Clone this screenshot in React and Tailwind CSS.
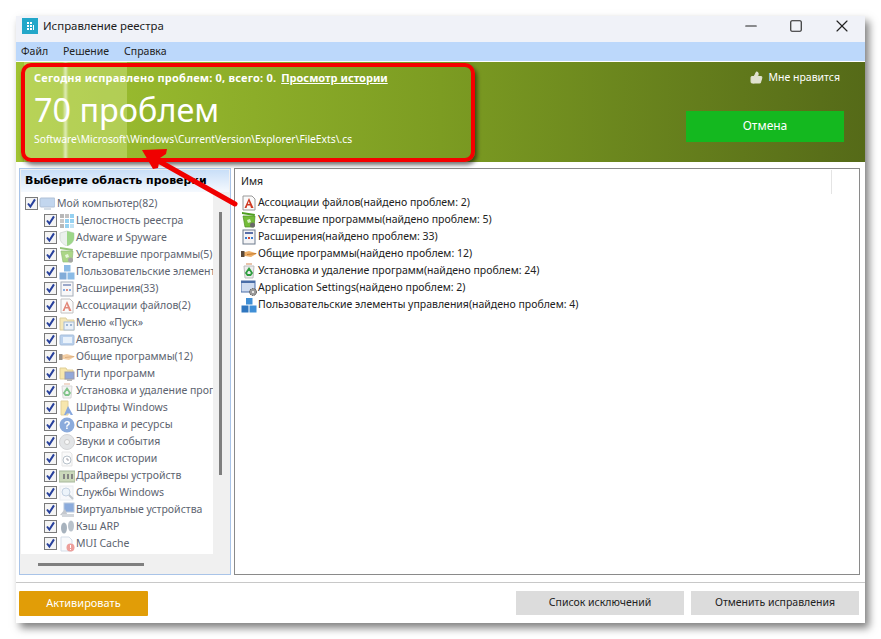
import React from 'react';
import { Minus, Square, X, ThumbsUp } from 'lucide-react';

const font = { fontFamily: '"Noto Sans", "Liberation Sans", sans-serif' };

// small hand-drawn product icons, 16 unit grid
const glyphs = {
    monitor: <><rect x="1" y="2" width="15" height="9" rx="1" fill="#a9c6e8" stroke="#8ea6c4" /><rect x="5" y="12" width="7" height="2" fill="#c3cfdc" /></>,
    grid: <><rect x="1" y="1" width="4" height="4" fill="#8a8a8a" /><rect x="6" y="1" width="4" height="4" fill="#9a9a9a" /><rect x="11" y="1" width="4" height="4" fill="#4fb3e8" /><rect x="1" y="6" width="4" height="4" fill="#a5a5a5" /><rect x="6" y="6" width="4" height="4" fill="#4fb3e8" /><rect x="11" y="6" width="4" height="4" fill="#4fb3e8" /><rect x="1" y="11" width="4" height="4" fill="#8a8a8a" /><rect x="6" y="11" width="4" height="4" fill="#4fb3e8" /><rect x="11" y="11" width="4" height="4" fill="#9ad2f0" /></>,
    shield: <><path d="M8 1 L15 3 V8 C15 12 11 15 8 16 C5 15 1 12 1 8 V3 Z" fill="#dfe8e2" stroke="#b9c6bd" /><path d="M8 1 L15 3 V8 C15 12 11 15 8 16 Z" fill="#5dbb3c" /></>,
    trash: <><path d="M1 0 L14 2 L13.5 4 L1 2 Z" fill="#4f9e22" /><path d="M2 4 H14 L13 15 H4 Z" fill="#74bc38" stroke="#4f8f22" strokeWidth="0.7" /><path d="M6 8 L9 7 L10 10 L7 11 Z" fill="#d8efc4" /><circle cx="11.5" cy="13" r="2.5" fill="#6a6a6a" /></>,
    blocks: <><rect x="5" y="1" width="6.5" height="6.5" fill="#3f8fd6" /><rect x="0.5" y="8.5" width="7" height="7" fill="#2f76bf" /><rect x="8.5" y="8.5" width="7" height="7" fill="#3f8fd6" /></>,
    calc: <><rect x="2" y="1" width="12" height="14" fill="#f4f4f6" stroke="#6d7a8c" /><rect x="4" y="3" width="8" height="2" fill="#5a6fa8" /><rect x="4" y="8" width="2" height="2" fill="#3a7bd0" /><rect x="7" y="8" width="2" height="2" fill="#c94a3a" /><rect x="10" y="8" width="2" height="2" fill="#3a7bd0" /></>,
    letter: <><path d="M2 1 H11 L14 4 V15 H2 Z" fill="#fafafa" stroke="#9a9a9a" /><path d="M8 3 L12.5 13 H10 L9.2 10.5 H6.3 L5.5 13 H3.5 Z M6.9 9 H8.7 L7.8 6.2 Z" fill="#cf3a22" /></>,
    menu: <><path d="M1 3 H7 L8 5 H15 V15 H1 Z" fill="#f0d98a" stroke="#c6ad5c" /><rect x="5" y="7" width="10" height="8" fill="#dfe9f5" stroke="#6d8fb8" /><rect x="7" y="9" width="2" height="2" fill="#5a83b5" /><rect x="11" y="9" width="2" height="2" fill="#5a83b5" /></>,
    autorun: <><rect x="1" y="3" width="14" height="10" rx="1" fill="#8db4e2" stroke="#6f93bf" /><rect x="4" y="5" width="9" height="6" fill="#dcebfa" /></>,
    hands: <><path d="M0 6 H4 L8 5 L16 7.5 L10 11 L4 10 H0 Z" fill="#eeb06a" /><rect x="0" y="5" width="3.5" height="6" fill="#5a4a3a" /><path d="M6 8.5 L15 7.5" stroke="#c47a2c" /></>,
    path: <><path d="M1 2 H7 L8 4 H14 V13 H1 Z" fill="#f2d878" stroke="#c9ac50" /><rect x="6" y="6" width="9" height="7" fill="#4a6fc0" stroke="#5a5a7a" /><rect x="8" y="13" width="5" height="2" fill="#888" /></>,
    recycle: <><path d="M3 3 H13 L12 15 H4 Z" fill="#ececec" stroke="#bdbdbd" /><path d="M5 1 H11" stroke="#e0b090" strokeWidth="1.5" /><path d="M8 5.5 L11 10 L9.5 12 H6.5 L5 10 Z" fill="none" stroke="#2f9e3f" strokeWidth="1.8" /></>,
    fonts: <><path d="M2 1 H9 V15 H2 Z" fill="#f2d878" stroke="#d1b45a" /><path d="M9 6 L14 15 H11.5 L11 13.5 H8 L7 15 H5 Z" fill="#3a6fc9" /></>,
    help: <><circle cx="8" cy="8" r="7.5" fill="#3f74c6" /><text x="8" y="12" textAnchor="middle" fontSize="11" fontWeight="700" fill="#fff" fontFamily="Liberation Sans">?</text></>,
    disc: <><circle cx="8" cy="8" r="7.5" fill="#d2d4d8" stroke="#b5b7bb" /><circle cx="8" cy="8" r="2.5" fill="#f4f4f4" stroke="#aaa" /></>,
    history: <><path d="M3 1 H11 L13 3 V15 H3 Z" fill="#f8f8f8" stroke="#d5d5d5" /><circle cx="8" cy="9" r="4" fill="#fff" stroke="#8a9aa8" /><path d="M8 7 V9 H10" stroke="#667" fill="none" /></>,
    driver: <><rect x="0" y="3" width="16" height="11" fill="#a9c08e" stroke="#6c8a5c" /><rect x="4" y="6" width="2" height="5" fill="#333" /><rect x="8" y="6" width="2" height="5" fill="#333" /><rect x="12" y="6" width="2" height="5" fill="#333" /></>,
    service: <><rect x="1" y="1" width="13" height="14" fill="#f2f5f9" stroke="#dce2e8" /><circle cx="7" cy="7" r="4" fill="#e0ecf8" stroke="#9cb4cf" /><path d="M10 10 L14 14" stroke="#9aa5b0" strokeWidth="2" /></>,
    virtual: <><rect x="5" y="1" width="10" height="9" fill="#3f74c6" stroke="#8aa2c4" /><path d="M1 13 L6 7 L9 14 Z" fill="#9da4ae" /><rect x="3" y="12" width="12" height="3" fill="#b7bdc5" /></>,
    feet: <><ellipse cx="5" cy="9" rx="3" ry="5.5" fill="#6d7f92" /><ellipse cx="12" cy="7" rx="3" ry="5.5" fill="#8b9aa9" /></>,
    mui: <><path d="M2 1 H10 L13 4 V15 H2 Z" fill="#f6f8fb" stroke="#b9c7da" /><circle cx="11.5" cy="11.5" r="4" fill="#e2605a" /><rect x="11" y="9" width="1" height="3" fill="#fff" /><rect x="11" y="13" width="1" height="1" fill="#fff" /></>,
    settings: <><rect x="0" y="1" width="14" height="11" fill="#cfdcf0" stroke="#4a6ea8" /><rect x="0" y="1" width="14" height="2" fill="#4a6ea8" /><circle cx="12" cy="12" r="3.5" fill="#9a9a9a" stroke="#555" strokeDasharray="1.5 1" /><circle cx="12" cy="12" r="1" fill="#fff" /></>,
};

const Icon = ({ name, className = '' }) => (
    <svg viewBox="0 0 16 16" className={`w-[16px] h-[16px] shrink-0 ${className}`}>{glyphs[name]}</svg>
);

const Check = () => (
    <span className="w-[13px] h-[13px] shrink-0 border border-[#7a7a7a] bg-[#f4f4f4] flex items-center justify-center">
        <svg viewBox="0 0 11 11" className="w-[11px] h-[11px]">
            <path d="M2 5.5 L4.4 8.6 L9 1.4" fill="none" stroke="#27409c" strokeWidth="2" />
        </svg>
    </span>
);

const treeItems = [
    ['grid', 'Целостность реестра'],
    ['shield', 'Adware и Spyware'],
    ['trash', 'Устаревшие программы(5)'],
    ['blocks', 'Пользовательские элементы управления(4)'],
    ['calc', 'Расширения(33)'],
    ['letter', 'Ассоциации файлов(2)'],
    ['menu', 'Меню «Пуск»'],
    ['autorun', 'Автозапуск'],
    ['hands', 'Общие программы(12)'],
    ['path', 'Пути программ'],
    ['recycle', 'Установка и удаление программ(24)'],
    ['fonts', 'Шрифты Windows'],
    ['help', 'Справка и ресурсы'],
    ['disc', 'Звуки и события'],
    ['history', 'Список истории'],
    ['driver', 'Драйверы устройств'],
    ['service', 'Службы Windows'],
    ['virtual', 'Виртуальные устройства'],
    ['feet', 'Кэш ARP'],
    ['mui', 'MUI Cache'],
];

const results = [
    ['letter', 'Ассоциации файлов(найдено проблем: 2)'],
    ['trash', 'Устаревшие программы(найдено проблем: 5)'],
    ['calc', 'Расширения(найдено проблем: 33)'],
    ['hands', 'Общие программы(найдено проблем: 12)'],
    ['recycle', 'Установка и удаление программ(найдено проблем: 24)'],
    ['settings', 'Application Settings(найдено проблем: 2)'],
    ['blocks', 'Пользовательские элементы управления(найдено проблем: 4)'],
];

const TreeRow = ({ icon, label }) => (
    <div className="h-[17px] flex items-center pl-[23px] whitespace-nowrap">
        <Check />
        <Icon name={icon} className="ml-[2px] opacity-60" />
        <span className="ml-[1px] text-[10.5px] text-[#5d6470]">{label}</span>
    </div>
);

const App = () => {
    return (
        <div className="w-[881px] h-[639px] bg-white pt-[16px] pl-[16px] overflow-hidden relative" style={font}>
            <div className="w-[849px] h-[607px] bg-white flex flex-col shadow-[4px_5px_8px_rgba(0,0,0,0.5)]">
                {/* Title bar */}
                <div className="h-[26px] bg-[#f0f2f8] flex items-center pl-[6px] pb-[6px] shrink-0">
                    <span className="w-[16px] h-[16px] bg-[#22a7c9] flex items-center justify-center">
                        <svg viewBox="0 0 12 12" className="w-3 h-3">
                            <path d="M3 2h2v2H3zM6 2h2v2H6zM3 5h2v2H3zM6 5h2v2H6zM3 8h2v2H3zM6 8h2v2H6zM9 5h1v5H9z" fill="#fff" />
                        </svg>
                    </span>
                    <span className="ml-[5px] text-[11.4px] text-[#1c1c1c]">Исправление реестра</span>
                    <div className="ml-auto flex items-center gap-[29px] pr-[13px] text-[#222]">
                        <Minus className="w-[18px] h-[18px]" strokeWidth={1.5} />
                        <Square className="w-[14px] h-[14px]" strokeWidth={1.9} />
                        <X className="w-[20px] h-[20px]" strokeWidth={1.4} />
                    </div>
                </div>

                {/* Menu */}
                <div className="h-[19px] bg-[#bcd8fb] flex items-center gap-[15px] pl-[5px] text-[10.5px] text-[#222] shrink-0">
                    <span>Файл</span>
                    <span>Решение</span>
                    <span>Справка</span>
                </div>

                {/* Status banner */}
                <div className="mt-[1px] h-[100px] shrink-0 relative flex justify-between bg-gradient-to-r from-[#a1c332] via-[#7c9c22] to-[#556a18]">
                    <div className="absolute left-[8px] top-0 bottom-0 w-[103px] bg-[#eefbb0]/30" />
                    <div className="absolute left-[48px] top-0 bottom-0 w-[3px] bg-white/60 blur-[1px]" />
                    <div className="relative pl-[18px] pt-[8px] text-white">
                        <div className="text-[11px] font-bold leading-[16px] whitespace-nowrap">
                            <span className="tracking-[0.2px]">Сегодня исправлено проблем: 0, всего: 0.</span>
                            <span className="ml-[5px] underline">Просмотр истории</span>
                        </div>
                        <div className="text-[32.4px] leading-[44px] mt-[1px] whitespace-nowrap">70 проблем</div>
                        <div className="text-[10.3px] leading-[14px] mt-[1px] whitespace-nowrap">Software\Microsoft\Windows\CurrentVersion\Explorer\FileExts\.cs</div>
                    </div>
                    <div className="relative flex flex-col items-end pr-[21px] pt-[8px]">
                        <div className="flex items-center gap-[5px] text-[10.5px] text-white pr-[4px]">
                            <ThumbsUp className="w-[13px] h-[13px] fill-[#e0e2d0] text-[#e0e2d0]" />
                            <span>Мне нравится</span>
                        </div>
                        <button className="mt-[25px] w-[158px] h-[31px] bg-[#14b81f] text-[12px] text-white">Отмена</button>
                    </div>
                </div>

                {/* Panels */}
                <div className="flex-1 min-h-0 flex gap-[3px] pt-[6px] px-[3px] pr-[5px]">
                    <div className="w-[212px] h-[407px] shrink-0 border border-[#a9c4e8] p-[1px] flex flex-col bg-[#f0f0f0]">
                        <div className="h-[22px] shrink-0 flex items-center pl-[4px] text-[11px] font-bold text-black bg-gradient-to-b from-[#c9dff8] to-[#f5f9fe] whitespace-nowrap overflow-hidden" style={{ fontFamily: '"DejaVu Sans", sans-serif' }}>
                            Выберите область проверки
                        </div>
                        <div className="flex-1 min-h-0 flex">
                            <div className="w-[192px] h-[362px] bg-white overflow-hidden pt-[3px]">
                                <div className="h-[17px] flex items-center pl-[4px] whitespace-nowrap">
                                    <Check />
                                    <Icon name="monitor" className="ml-[1px] opacity-70" />
                                    <span className="ml-[2px] text-[10.5px] text-[#5d6470]">Мой компьютер(82)</span>
                                </div>
                                {treeItems.map(([icon, label]) => (
                                    <TreeRow key={label} icon={icon} label={label} />
                                ))}
                            </div>
                            <div className="flex-1 pt-[20px] pl-[6px]">
                                <div className="w-[3px] h-[263px] bg-[#7f7f7f]" />
                            </div>
                        </div>
                        <div className="h-[17px] shrink-0 pt-[7px] pl-[17px]">
                            <div className="w-[106px] h-[3px] bg-[#7f7f7f]" />
                        </div>
                    </div>

                    <div className="w-[626px] h-[407px] border border-[#8a8a8a] bg-white">
                        <div className="h-[25px] flex items-center pl-[6px] pr-[27px] text-[10.5px] text-[#222]">
                            <span>Имя</span>
                            <span className="ml-auto w-px h-[24px] bg-[#e4e4e4]" />
                        </div>
                        <div className="pl-[6px]">
                            {results.map(([icon, label]) => (
                                <div key={label} className="h-[17px] flex items-center whitespace-nowrap">
                                    <Icon name={icon} />
                                    <span className="ml-[1px] text-[10.5px] text-[#222]">{label}</span>
                                </div>
                            ))}
                        </div>
                    </div>
                </div>

                {/* Footer */}
                <div className="h-[41px] shrink-0 border-t border-[#c8c8c8] flex items-start pt-[8px] px-[3px] pr-[6px] text-[10.5px]">
                    <button className="w-[129px] h-[25px] bg-[#e19d07] rounded-[1px] text-white text-[11px]">Активировать</button>
                    <button className="ml-auto w-[168px] h-[24px] bg-[#dcdcdc] text-[#222]">Список исключений</button>
                    <button className="ml-[7px] w-[168px] h-[24px] bg-[#dcdcdc] text-[#222]">Отменить исправления</button>
                </div>
            </div>

            {/* Red annotation frame and arrow */}
            <div className="absolute left-[21px] top-[63px] w-[454px] h-[99px] border-[4px] border-[#f50000] rounded-[10px] shadow-[2px_3px_4px_rgba(0,0,0,0.55)]" />
            <svg className="absolute left-0 top-0 w-[881px] h-[639px] pointer-events-none" viewBox="0 0 881 639">
                <g fill="#f00000">
                    <path d="M235 204 L155 159" stroke="#f00000" strokeWidth="5" strokeLinecap="round" />
                    <path d="M142 150 L167 149 L166 154 L160 158 L158 168 L153 169 Z" />
                </g>
            </svg>
        </div>
    );
};

export default App;
